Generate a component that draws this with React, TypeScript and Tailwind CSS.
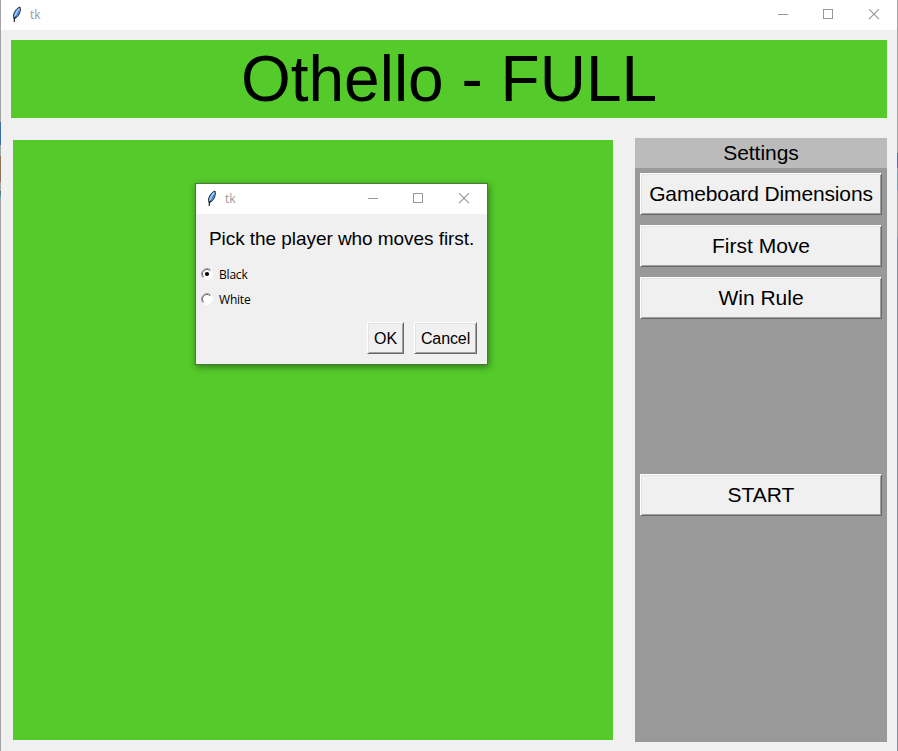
import React from "react";

const arial = "font-['Liberation_Sans',Arial,sans-serif]";
const segoe = "font-['Open_Sans','Noto_Sans',sans-serif]";

function Feather() {
  return (
    <svg width="12" height="17" viewBox="0 0 12 17" className="mb-[2px] shrink-0">
      <path d="M9 1 C6.8 1.4 4.2 4.2 3 7.4 C2.3 9.4 2.2 11.2 2.9 12.6 C5 12.2 7.2 10.3 8.2 8 C9.2 5.8 10 3 9 1 Z" fill="#6aa5ea" stroke="#252c38" strokeWidth="1" />
      <path d="M8 2.8 C6 5.2 4.6 8.2 3.9 10.6" stroke="#bcdcff" strokeWidth="1" fill="none" />
      <path d="M8 5.2 C7 8 5.6 10 4.2 11.4" stroke="#3a74be" strokeWidth="1" fill="none" />
      <path d="M4.6 10.8 L3.4 12.6 L3.2 16" stroke="#101010" strokeWidth="1.1" fill="none" />
    </svg>
  );
}

function TitleBar({ pad }: { pad: string }) {
  return (
    <div className={`flex h-[30px] shrink-0 items-center bg-white ${pad}`}>
      <Feather />
      <span className={`ml-[7px] grow text-[12px] leading-[16px] text-[#999] ${segoe}`}>tk</span>
      <svg width="102" height="11" viewBox="0 0 102 11" className="mb-[2px] shrink-0" fill="none" stroke="#999">
        <path d="M0 5.5H10" />
        <rect x="45.5" y="0.5" width="9" height="9" />
        <path d="M91 0.2L101 10.2M101 0.2L91 10.2" strokeWidth="1.2" />
      </svg>
    </div>
  );
}

function TkButton({ children, className }: { children: React.ReactNode; className: string }) {
  return (
    <button
      className={`flex shrink-0 items-center justify-center whitespace-nowrap border border-t-white border-l-white border-r-[#696969] border-b-[#696969] bg-[#f0f0f0] text-black shadow-[inset_1px_1px_0_#e3e3e3,inset_-1px_-1px_0_#a0a0a0] ${className}`}
    >
      {children}
    </button>
  );
}

function Radio({ label, checked }: { label: string; checked?: boolean }) {
  return (
    <label className="flex h-[25px] items-center">
      <svg width="12" height="12" viewBox="0 0 12 12" className="mb-[2px] shrink-0">
        <circle cx="6" cy="6" r="5" fill="#fff" />
        <path d="M2.1 9.9A5.5 5.5 0 0 1 9.9 2.1" fill="none" stroke="#a0a0a0" />
        <path d="M2.8 9.2A4.5 4.5 0 0 1 9.2 2.8" fill="none" stroke="#696969" />
        <path d="M9.9 2.1A5.5 5.5 0 0 1 2.1 9.9" fill="none" stroke="#fff" />
        {checked && <circle cx="6" cy="6" r="2.1" fill="#000" />}
      </svg>
      <span className={`ml-[6px] text-[12px] leading-[16px] tracking-[-0.2px] text-black ${segoe}`}>{label}</span>
    </label>
  );
}

function Dialog() {
  return (
    <div className="absolute left-[195px] top-[183px] flex h-[182px] w-[293px] flex-col border border-[#4a7a38] bg-[#f0f0f0] shadow-[1px_2px_7px_0px_rgba(0,0,0,0.42)]">
      <TitleBar pad="pl-[10px] pr-[17px]" />
      <div className="mt-[14px] whitespace-nowrap pl-[13px] text-[19px] leading-[22px] tracking-[-0.06px] text-black">
        Pick the player who moves first.
      </div>
      <div className="mt-[12px] flex flex-col pl-[5px]">
        <Radio label="Black" checked />
        <Radio label="White" />
      </div>
      <div className="mt-[10px] flex justify-end gap-[10px] pr-[10px]">
        <TkButton className="h-[32px] w-[37px] pt-px text-[16px]">OK</TkButton>
        <TkButton className="h-[32px] w-[63px] pt-px text-[16px] tracking-[-0.1px]">Cancel</TkButton>
      </div>
    </div>
  );
}

export default function App() {
  const wide = "h-[42px] w-[242px] text-[21px]";
  return (
    <div className={`relative flex h-[751px] w-[898px] overflow-hidden ${arial}`}>
      <div className="w-px shrink-0 bg-[linear-gradient(to_bottom,#a3a3a3_122px,#3c6ea8_122px,#3c6ea8_145px,#a3a3a3_145px,#a3a3a3_156px,#8f735d_156px,#8f735d_182px,#a3a3a3_182px,#a3a3a3_191px,#4d6670_191px,#6aa0ae_198px,#a3a3a3_198px)]" />
      <div className="flex w-[896px] shrink-0 flex-col bg-[#f0f0f0]">
        <TitleBar pad="pl-[10px] pr-[17px]" />
        <header className="mx-[10px] mt-[10px] flex h-[78px] shrink-0 items-center justify-center bg-[#54cb2b] text-[64px] leading-[78px] text-black">
          Othello - FULL
        </header>
        <main className="mt-[20px] flex items-start justify-between pl-[12px] pr-[10px]">
          <section className="mt-[2px] h-[600px] w-[600px] bg-[#54cb2b]" />
          <aside className="flex h-[604px] w-[252px] flex-col bg-[#999]">
            <h2 className="h-[30px] shrink-0 bg-[#bbb] text-center text-[21px] leading-[30px] tracking-[-0.05px] text-black">Settings</h2>
            <div className="flex flex-col gap-[10px] pl-[5px] pt-[5px]">
              <TkButton className={`tracking-[-0.14px] ${wide}`}>Gameboard Dimensions</TkButton>
              <TkButton className={wide}>First Move</TkButton>
              <TkButton className={wide}>Win Rule</TkButton>
              <TkButton className={`mt-[145px] ${wide}`}>START</TkButton>
            </div>
          </aside>
        </main>
      </div>
      <div className="w-px shrink-0 bg-[linear-gradient(to_bottom,#a3a3a3_153px,#2f86ac_153px,#2f86ac_168px,#9aa5aa_168px,#6fa5b5_174px,#6fa5b5_190px,#a3a3a3_192px,#a3a3a3_235px,#8790a2_240px)]" />
      <Dialog />
    </div>
  );
}
